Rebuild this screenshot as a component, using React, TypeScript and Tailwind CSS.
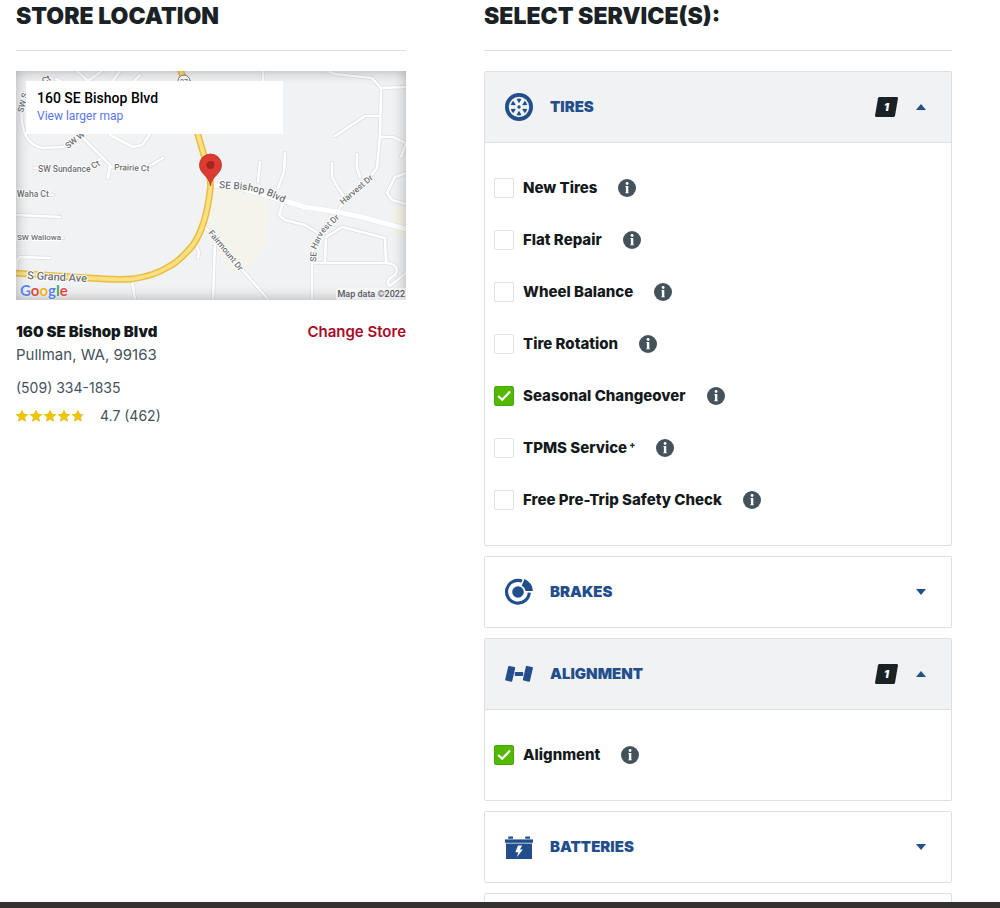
import { useState, type ReactNode } from "react";

type Service = { name: string; note?: string; selected?: boolean };

const TIRE_SERVICES: Service[] = [
  { name: "New Tires" },
  { name: "Flat Repair" },
  { name: "Wheel Balance" },
  { name: "Tire Rotation" },
  { name: "Seasonal Changeover", selected: true },
  { name: "TPMS Service", note: "+" },
  { name: "Free Pre-Trip Safety Check" },
];

const ALIGNMENT_SERVICES: Service[] = [{ name: "Alignment", selected: true }];

function TireIcon() {
  return (
    <svg viewBox="0 0 28 28" className="size-7" fill="currentColor" aria-hidden="true">
      <circle cx="14" cy="14" r="12.1" fill="none" stroke="currentColor" strokeWidth="3.8" />
      <circle cx="14" cy="14" r="1.7" />
      {[0, 60, 120, 180, 240, 300].map((a) => (
        <path key={a} d="M11.6 5.9 Q14 5.2 16.4 5.9 L14.4 9.8 H13.6 Z" transform={`rotate(${a} 14 14)`} />
      ))}
    </svg>
  );
}

function BrakeIcon() {
  return (
    <svg viewBox="0 0 28 28" className="size-7" fill="currentColor" aria-hidden="true">
      <path
        d="M17 3.1 A11.4 11.4 0 1 0 24.3 14.6"
        fill="none"
        stroke="currentColor"
        strokeWidth="3.2"
      />
      <circle cx="13" cy="14" r="5.8" />
      <path d="M19.4 1 Q27 4 28 13 L20.6 13 Q20 9.6 16.8 7.8 Z" />
    </svg>
  );
}

function AlignmentIcon() {
  return (
    <svg viewBox="0 0 28 28" className="size-7" fill="currentColor" aria-hidden="true">
      <rect x="1.6" y="6.3" width="7.2" height="15" rx="1" transform="rotate(13 5 13.8)" />
      <rect x="19.3" y="6.3" width="7.2" height="15" rx="1" transform="rotate(13 23 13.8)" />
      <rect x="9.8" y="11.9" width="8.4" height="4" rx="0.6" />
    </svg>
  );
}

function BatteryIcon() {
  return (
    <svg viewBox="0 0 28 28" className="size-7" fill="currentColor" aria-hidden="true">
      <path d="M3.2 3.6 h4.8 v2.2 h-4.8 Z M20.2 3.6 h4.8 v2.2 h-4.8 Z" />
      <path d="M0 6.4 H28 V9.8 H0 Z" />
      <path
        fillRule="evenodd"
        d="M1 10.6 H27 V26 H1 Z M13 12.4 L10.3 19.2 H13.3 L12 24 L17.8 16.4 H14.9 L17.2 12.4 Z"
      />
    </svg>
  );
}

function InfoIcon() {
  return (
    <svg viewBox="0 0 18 18" className="size-[18px]" aria-hidden="true">
      <circle cx="9" cy="9" r="9" fill="#44525c" />
      <circle cx="9.1" cy="4.5" r="1.4" fill="#fff" />
      <path d="M7.3 6.9 H10.3 V13.4 H10.8 V14.2 H7.3 V13.4 H7.9 V7.7 H7.3 Z" fill="#fff" />
    </svg>
  );
}

function ServiceRow({ service }: { service: Service }) {
  const id = service.name.toLowerCase().replace(/[^a-z]+/g, "-");
  return (
    <li className="flex h-[52px] items-center pl-[9px]">
      <span className="grid size-5 shrink-0">
        <input
          id={id}
          type="checkbox"
          defaultChecked={service.selected}
          className="peer col-start-1 row-start-1 size-5 appearance-none rounded-xs border border-[#dfe2e5] bg-white checked:border-[#43a800] checked:bg-[#54b800]"
        />
        <svg
          viewBox="0 0 20 20"
          className="pointer-events-none invisible col-start-1 row-start-1 size-5 peer-checked:visible"
          aria-hidden="true"
        >
          <path d="M4.2 10 L8.2 13.8 L16 5.6" fill="none" stroke="#fff" strokeWidth="2.2" />
        </svg>
      </span>
      <label htmlFor={id} className="pl-[9px] text-[15px] font-extrabold text-[#14191c]">
        {service.name}
        {service.note && (
          <sup className="ml-[2px] text-[9px] font-extrabold text-[#1b2226]">{service.note}</sup>
        )}
      </label>
      <button type="button" aria-label={`About ${service.name}`} className="ml-[21px]">
        <InfoIcon />
      </button>
    </li>
  );
}

function ServicePanel({
  title,
  icon,
  services = [],
}: {
  title: string;
  icon: ReactNode;
  services?: Service[];
}) {
  const [open, setOpen] = useState(services.length > 0);
  const count = services.filter((s) => s.selected).length;
  return (
    <section className="shrink-0 rounded-xs border border-[#dddfe3] bg-white">
      <h3>
        <button
          type="button"
          aria-expanded={open}
          onClick={() => setOpen(!open)}
          className={
            open
              ? "flex h-[71px] w-full items-center border-b border-[#dddfe3] bg-[#f1f2f4] pr-[25px] pl-5 text-[#234e8c]"
              : "flex h-[70px] w-full items-center bg-white pr-[25px] pl-5 text-[#234e8c]"
          }
        >
          {icon}
          <span className="pl-[17px] text-[15px] font-black">{title}</span>
          <span className="ml-auto flex items-center gap-[18px]">
            {count > 0 && (
              <span className="flex h-5 w-[23px] items-center justify-center bg-[#1b2226] text-[11px] font-black text-white italic [clip-path:polygon(17%_0,97%_0,100%_6%,87%_94%,83%_100%,3%_100%,0_94%,13%_6%)]">
                {count}
              </span>
            )}
            <svg viewBox="0 0 10 6" className="h-1.5 w-[10px]" fill="currentColor" aria-hidden="true">
              <path d={open ? "M5 0 L10 6 H0 Z" : "M0 0 H10 L5 6 Z"} />
            </svg>
          </span>
        </button>
      </h3>
      {open && (
        <ul className="py-[19px]">
          {services.map((s) => (
            <ServiceRow key={s.name} service={s} />
          ))}
        </ul>
      )}
    </section>
  );
}

const MINOR_ROADS = [
  "M296 192 V229",
  "M297 192 H371 Q385 194 379 204 Q368 210 374 215 L390 202",
  "M309 191 L310 166 L326 156 L369 167 L370 192",
  "M296 191 L297 176 L304 161 L321 146 L324 136 L352 109 L361 97 L364 64 L365 17 L356 7 L319 3 L312 0",
  "M365 17 L390 16",
  "M319 65 L349 45 H363",
  "M364 66 H377 L390 72 L385 86",
  "M390 102 L379 106 L371 122 L376 129 L390 133",
  "M316 92 V106 L322 117 L327 124",
  "M341 83 V97 L344 106",
  "M269 82 L268 101 L262 117",
  "M244 91 L242 111",
  "M267 131 L263 144 L269 149 L289 154 L302 162",
  "M189 156 L229 202 L252 228",
  "M199 170 L197 229",
  "M247 0 V10",
  "M8 22 Q4 30 6 52 Q9 74 27 77 L47 76 L66 64",
  "M66 66 L94 94 L92 107",
  "M84 88 L74 96 M19 97 H23",
  "M94 96 L130 97 L147 87",
  "M94 64 L117 76 L126 74 L134 63",
  "M61 0 L72 10 L86 0",
  "M96 11 L104 0 M118 10 L124 4",
  "M40 8 L53 14",
  "M0 144 L44 146",
  "M1 201 V189 L4 186 L34 187",
  "M179 172 L183 181 L182 187",
  "M116 209 L119 229",
  "M34 124 H37 M44 167 H47",
];

const BISHOP = "M194 114 L220 116 L266 129 L289 136 L322 141 L346 146 L390 158";
const GRAND =
  "M164 -2 L169 11 L182 64 L190 91 Q196 108 194 120 Q190 155 177 174 Q163 191 152 196 Q138 205 116 208 Q100 209 72 207 L-2 202";

function StoreMap() {
  return (
    <div className="relative mt-5 h-[229px] overflow-hidden bg-[#f1f2f4] font-[Roboto,sans-serif]">
      <svg
        viewBox="0 0 390 229"
        preserveAspectRatio="xMidYMid slice"
        className="h-full w-full"
        role="img"
        aria-label="Map of the store's location"
      >
        <rect width="390" height="229" fill="#f1f2f4" />
        <path d="M199 117 L252 129 L250 176 L239 192 L219 202 L209 196 L189 154 Z" fill="#f5f4ec" />
        <path d="M376 136 H390 V166 L376 160 Z" fill="#f5f4e8" />
        <g fill="none" strokeLinecap="round" strokeLinejoin="round">
          {MINOR_ROADS.map((d) => (
            <path key={d} d={d} stroke="#dcdee1" strokeWidth="4" />
          ))}
          <path d={BISHOP} stroke="#e3e5e7" strokeWidth="6" />
          {MINOR_ROADS.map((d) => (
            <path key={d} d={d} stroke="#fff" strokeWidth="2.6" />
          ))}
          <path d={BISHOP} stroke="#fff" strokeWidth="5" />
          <path d={GRAND} stroke="#e9bd40" strokeWidth="6.8" />
          <path d={GRAND} stroke="#fbe083" strokeWidth="3.8" />
          <circle cx="168" cy="10" r="6" fill="#fff" stroke="#777" strokeWidth="1" />
        </g>
        <g
          fill="#6d7175"
          stroke="#fff"
          strokeWidth="2"
          strokeLinejoin="round"
          paintOrder="stroke"
          fontSize="8.5"
          fontWeight="500"
        >
          <text x="168" y="13" fontSize="7" textAnchor="middle">27</text>
          <text x="22" y="101">SW Sundance</text>
          <text x="77" y="98" transform="rotate(-28 77 98)">Ct</text>
          <text x="98" y="99" transform="rotate(2 98 99)">Prairie Ct</text>
          <text x="1" y="126">Waha Ct</text>
          <text x="1" y="169" fontSize="8">SW Wallowa</text>
          <text x="7" y="42" transform="rotate(-75 7 42)">SW S</text>
          <text x="28" y="13" transform="rotate(-30 28 13)">Ct</text>
          <text x="52" y="78" transform="rotate(-38 52 78)">SW W</text>
          <text x="11" y="208" fontSize="11" transform="rotate(3 11 208)">S Grand Ave</text>
          <path id="bishop-label" d="M203 117 L230 119 L248 123 L275 135" fill="none" stroke="none" />
          <text fontSize="10"><textPath href="#bishop-label">SE Bishop Blvd</textPath></text>
          <text x="192" y="162" transform="rotate(51 192 162)">Fairmount Dr</text>
          <path id="harvest-label" d="M300 191 L301 176 L308 162 L330 141" fill="none" stroke="none" />
          <text><textPath href="#harvest-label">SE Harvest Dr</textPath></text>
          <text x="327" y="134" transform="rotate(-41 327 134)">Harvest Dr</text>
        </g>
        <path
          d="M194.5 115 C193.5 105 183.5 103 183.5 94 A11 11 0 0 1 205.5 94 C205.5 103 195.5 105 194.5 115 Z"
          fill="#dc3b32"
          stroke="#b8342a"
          strokeWidth="0.8"
        />
        <circle cx="194.5" cy="94" r="4" fill="#a32520" />
      </svg>
      <div className="pointer-events-none absolute inset-0 shadow-[inset_0_0_14px_rgba(0,0,0,0.3)]" />
      <div className="absolute top-[10px] left-[10px] w-[257px] bg-white px-[11px] pt-2 pb-[9px]">
        <p className="text-sm leading-[18px] font-medium text-black">160 SE Bishop Blvd</p>
        <a href="#map" className="block text-xs leading-[18px] text-[#5a76e8]">
          View larger map
        </a>
      </div>
      <div className="absolute bottom-0 left-1 font-[Lato,sans-serif] text-[15px] leading-5 font-bold [text-shadow:0_0_2px_white]">
        <span className="text-[#5484ed]">G</span>
        <span className="text-[#e0493e]">o</span>
        <span className="text-[#ecb51c]">o</span>
        <span className="text-[#5484ed]">g</span>
        <span className="text-[#3ba757]">l</span>
        <span className="text-[#e0493e]">e</span>
      </div>
      <p className="absolute right-0 bottom-0 bg-white/50 px-px text-[9px] leading-3 font-medium text-[#55585b]">
        Map data ©2022
      </p>
    </div>
  );
}

const STAR =
  "M7 0.7 L8.9 4.8 L13.3 5.3 L10 8.3 L10.9 12.7 L7 10.5 L3.1 12.7 L4 8.3 L0.7 5.3 L5.1 4.8 Z";

function Stars() {
  return (
    <svg viewBox="1 0 70 14" className="h-[14px] w-[70px]" role="img" aria-label="Rated 4.7 out of 5">
      <clipPath id="rating">
        <rect width="66" height="14" />
      </clipPath>
      {[0, 14, 28, 42, 56].map((x) => (
        <path key={x} d={STAR} transform={`translate(${x} 0)`} fill="#c3c8cc" />
      ))}
      <g clipPath="url(#rating)">
        {[0, 14, 28, 42, 56].map((x) => (
          <path key={x} d={STAR} transform={`translate(${x} 0)`} fill="#edc500" />
        ))}
      </g>
    </svg>
  );
}

function ColumnTitle({ children }: { children: ReactNode }) {
  return (
    <h2 className="border-b border-[#dddfe3] pt-1 pb-[22px] text-[23px] leading-6 font-black whitespace-nowrap text-[#1b2226]">
      {children}
    </h2>
  );
}

export default function App() {
  return (
    <div className="flex h-screen flex-col bg-white font-[Inter,sans-serif]">
      <main className="grid min-h-0 flex-1 grid-cols-[5fr_6fr] gap-x-[78px] overflow-hidden pr-12 pl-4">
        <section>
          <ColumnTitle>STORE LOCATION</ColumnTitle>
          <StoreMap />
          <div className="pt-5 text-[15px] leading-[23px] text-[#44525c]">
            <div className="flex justify-between">
              <strong className="font-black text-[#14191c]">160 SE Bishop Blvd</strong>
              <a href="#change-store" className="font-semibold text-[#ab0a26]">
                Change Store
              </a>
            </div>
            <p>Pullman, WA, 99163</p>
            <p className="pt-[10px] text-sm leading-[23px]">
              <a href="tel:+15093341835">(509) 334-1835</a>
            </p>
            <p className="flex items-center gap-[14px] pt-[5px] text-sm leading-[23px]">
              <Stars />
              <span>4.7 (462)</span>
            </p>
          </div>
        </section>
        <section>
          <ColumnTitle>SELECT SERVICE(S):</ColumnTitle>
          <div className="flex flex-col gap-[10px] pt-5">
            <ServicePanel title="TIRES" icon={<TireIcon />} services={TIRE_SERVICES} />
            <ServicePanel title="BRAKES" icon={<BrakeIcon />} />
            <ServicePanel title="ALIGNMENT" icon={<AlignmentIcon />} services={ALIGNMENT_SERVICES} />
            <ServicePanel title="BATTERIES" icon={<BatteryIcon />} />
            <div className="h-[72px] shrink-0 rounded-xs border border-[#dddfe3]" />
          </div>
        </section>
      </main>
      <footer className="h-1.5 shrink-0 bg-[#34312e]" />
    </div>
  );
}
